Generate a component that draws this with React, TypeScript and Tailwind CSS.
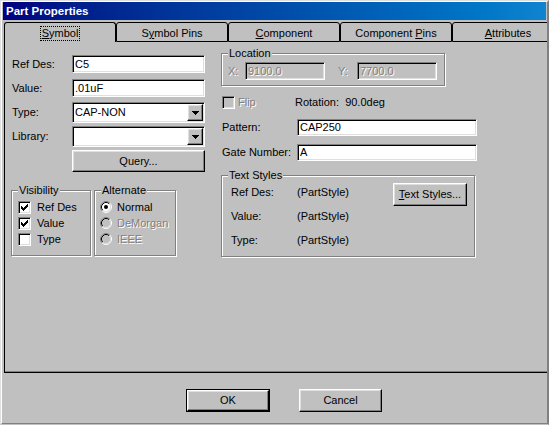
import type { ReactNode } from "react";

const sunken =
  "border border-t-[#808080] border-l-[#808080] border-r-white border-b-white shadow-[inset_1px_1px_0_#000,inset_-1px_-1px_0_#dfdfdf]";
const raised =
  "border border-t-white border-l-white border-r-black border-b-black shadow-[inset_-1px_-1px_0_#808080,inset_1px_1px_0_#dfdfdf]";
const grayed = "text-[#808080] [text-shadow:1px_1px_0_#fff]";
const etched = "border border-[#808080] shadow-[inset_1px_1px_0_#fff,1px_1px_0_#fff]";

function Tab({ children, selected }: { children: ReactNode; selected?: boolean }) {
  return (
    <div
      className={`flex h-[20px] w-[112px] shrink-0 justify-center rounded-t-[3px] border-x border-t border-black ${
        selected ? "pt-[3px]" : "border-b pt-[4px]"
      }`}
    >
      {selected ? (
        <span className="h-[15px] border border-dotted border-black px-px">{children}</span>
      ) : (
        <span>{children}</span>
      )}
    </div>
  );
}

function Key({ children }: { children: ReactNode }) {
  return <span className="underline underline-offset-[1px]">{children}</span>;
}

function TextField({
  children,
  disabled,
  className = "",
}: {
  children?: ReactNode;
  disabled?: boolean;
  className?: string;
}) {
  return (
    <div
      className={`flex shrink-0 items-center px-[2px] ${sunken} ${
        disabled ? `bg-[#c0c0c0] ${grayed}` : "bg-white"
      } ${className}`}
    >
      {children}
    </div>
  );
}

function Combo({ value }: { value: string }) {
  return (
    <div className={`flex h-[21px] w-[133px] shrink-0 bg-white p-px ${sunken}`}>
      <span className="flex flex-1 items-center pl-px">{value}</span>
      <span className={`flex h-full w-[16px] items-center justify-center bg-[#c0c0c0] ${raised}`}>
        <svg width="7" height="4" viewBox="0 0 7 4">
          <path d="M0 0h7v1h-1v1h-1v1h-1v1h-1v-1h-1v-1h-1v-1h-1z" fill="#000" />
        </svg>
      </span>
    </div>
  );
}

function Button({ children, className = "" }: { children: ReactNode; className?: string }) {
  return (
    <div className={`flex shrink-0 items-center justify-center bg-[#c0c0c0] ${raised} ${className}`}>
      {children}
    </div>
  );
}

function CheckBox({ checked, disabled }: { checked?: boolean; disabled?: boolean }) {
  return (
    <span
      className={`flex h-[13px] w-[13px] shrink-0 items-center justify-center ${sunken} ${
        disabled ? "bg-[#c0c0c0]" : "bg-white"
      }`}
    >
      {checked && (
        <svg width="7" height="7" viewBox="0 0 7 7">
          <path
            d="M0 2h1v1h1v1h1v-1h1v-1h1v-1h1v-1h1v3h-1v1h-1v1h-1v1h-1v1h-1v-1h-1v-1h-1z"
            fill="#000"
          />
        </svg>
      )}
    </span>
  );
}

function Radio({ checked, disabled }: { checked?: boolean; disabled?: boolean }) {
  return (
    <svg width="12" height="12" viewBox="0 0 12 12" className="shrink-0">
      <circle cx="6" cy="6" r="4.5" fill={disabled ? "#c0c0c0" : "#fff"} />
      <path d="M2.11 9.89A5.5 5.5 0 0 1 9.89 2.11" fill="none" stroke="#808080" />
      <path d="M9.89 2.11A5.5 5.5 0 0 1 2.11 9.89" fill="none" stroke="#fff" />
      <path d="M2.82 9.18A4.5 4.5 0 0 1 9.18 2.82" fill="none" stroke="#000" />
      <path d="M9.18 2.82A4.5 4.5 0 0 1 2.82 9.18" fill="none" stroke="#dfdfdf" />
      {checked && <circle cx="6" cy="6" r="2" fill="#000" />}
    </svg>
  );
}

function Group({
  title,
  className = "",
  children,
}: {
  title: string;
  className?: string;
  children: ReactNode;
}) {
  return (
    <fieldset className={`shrink-0 ${etched} ${className}`}>
      <legend className="ml-[6px] bg-[#c0c0c0] px-px leading-[13px]">{title}</legend>
      {children}
    </fieldset>
  );
}

function Row({
  label,
  className = "",
  children,
}: {
  label: string;
  className?: string;
  children: ReactNode;
}) {
  return (
    <div className={`flex items-center ${className}`}>
      <span className="w-[61px] shrink-0 pl-px">{label}</span>
      {children}
    </div>
  );
}

export default function App() {
  return (
    <div className="h-[425px] w-[549px] overflow-hidden bg-[#c0c0c0] font-['Liberation_Sans',Arial,sans-serif] text-[11px] leading-[13px] text-black">
      <div className="flex h-full flex-col border border-t-[#dfdfdf] border-l-[#dfdfdf] border-r-[#808080] border-b-[#c0c0c0]">
        <div className="flex flex-1 flex-col border border-t-white border-l-white border-r-[#808080] border-b-[#808080]">
          {/* title bar */}
          <div className="mx-px flex h-[18px] shrink-0 items-center bg-linear-to-r from-[#000080] to-[#1084d0] pl-[3px] text-[11.5px] font-bold text-white">
            Part Properties
          </div>

          {/* tabs */}
          <div className="mt-[2px] flex h-[20px] shrink-0 overflow-hidden pl-[2px]">
            <Tab selected>
              <Key>S</Key>ymbol
            </Tab>
            <Tab>
              S<Key>y</Key>mbol Pins
            </Tab>
            <Tab>
              <Key>C</Key>omponent
            </Tab>
            <Tab>
              Component <Key>P</Key>ins
            </Tab>
            <Tab>
              <Key>A</Key>ttributes
            </Tab>
          </div>

          {/* tab page */}
          <div className="ml-[2px] flex h-[331px] shrink-0 border-b border-l border-b-black border-l-black shadow-[inset_0_-1px_0_#808080]">
            <div className="ml-[6px] flex w-[194px] shrink-0 flex-col pt-[13px]">
              <Row label="Ref Des:">
                <TextField className="h-[18px] w-[133px]">C5</TextField>
              </Row>
              <Row label="Value:" className="mt-[6px]">
                <TextField className="h-[18px] w-[133px]">.01uF</TextField>
              </Row>
              <Row label="Type:" className="mt-[5px]">
                <Combo value="CAP-NON" />
              </Row>
              <Row label="Library:" className="mt-[3px]">
                <Combo value="" />
              </Row>
              <div className="mt-[3px] flex">
                <Button className="ml-[61px] h-[22px] w-[133px]">Query...</Button>
              </div>

              <div className="mt-[12px] flex gap-[3px]">
                <Group title="Visibility" className="h-[72px] w-[80px]">
                  <div className="flex flex-col pl-[6px] pt-[2px]">
                    <label className="flex h-[16px] items-center gap-[6px]">
                      <CheckBox checked />
                      Ref Des
                    </label>
                    <label className="flex h-[16px] items-center gap-[6px]">
                      <CheckBox checked />
                      Value
                    </label>
                    <label className="flex h-[16px] items-center gap-[6px]">
                      <CheckBox />
                      Type
                    </label>
                  </div>
                </Group>
                <Group title="Alternate" className="h-[72px] w-[82px]">
                  <div className="flex flex-col pl-[5px] pt-[2px]">
                    <label className="flex h-[16px] items-center gap-[5px]">
                      <Radio checked />
                      Normal
                    </label>
                    <label className={`flex h-[16px] items-center gap-[5px] ${grayed}`}>
                      <Radio disabled />
                      DeMorgan
                    </label>
                    <label className={`flex h-[16px] items-center gap-[5px] ${grayed}`}>
                      <Radio disabled />
                      IEEE
                    </label>
                  </div>
                </Group>
              </div>
            </div>

            <div className="ml-[16px] flex w-[260px] shrink-0 flex-col pt-[5px]">
              <Group title="Location" className="h-[39px] w-[224px]">
                <div className="flex items-center pl-[6px] pt-[2px]">
                  <span className={`w-[17px] shrink-0 ${grayed}`}>X:</span>
                  <TextField disabled className="h-[18px] w-[80px]">
                    9100.0
                  </TextField>
                  <span className={`ml-[13px] w-[19px] shrink-0 ${grayed}`}>Y:</span>
                  <TextField disabled className="h-[18px] w-[80px]">
                    7700.0
                  </TextField>
                </div>
              </Group>

              <div className="mt-[10px] flex h-[13px] items-center">
                <span className="ml-px flex w-[73px] shrink-0 items-center gap-[3px]">
                  <CheckBox disabled />
                  <span className={grayed}>Flip</span>
                </span>
                <span>Rotation:&nbsp; 90.0deg</span>
              </div>

              <div className="mt-[10px] flex items-center">
                <span className="ml-px w-[75px] shrink-0">Pattern:</span>
                <TextField className="h-[17px] w-[180px]">CAP250</TextField>
              </div>
              <div className="mt-[8px] flex items-center">
                <span className="ml-px w-[75px] shrink-0">Gate Number:</span>
                <TextField className="h-[17px] w-[180px]">A</TextField>
              </div>

              <Group title="Text Styles" className="mt-[8px] h-[88px] w-[254px]">
                <div className="flex">
                  <div className="-mt-[2px] flex flex-col pl-[9px]">
                    {["Ref Des:", "Value:", "Type:"].map((l) => (
                      <div key={l} className="flex h-[24px] items-center">
                        <span className="w-[66px] shrink-0">{l}</span>
                        <span>(PartStyle)</span>
                      </div>
                    ))}
                  </div>
                  <Button className="ml-auto mr-[7px] mt-px h-[23px] w-[74px]">
                    <span>
                      <Key>T</Key>ext Styles...
                    </span>
                  </Button>
                </div>
              </Group>
            </div>
          </div>

          {/* dialog buttons */}
          <div className="flex flex-1 items-start gap-[29px] pl-[184px] pt-[16px]">
            <div className="flex h-[23px] w-[84px] border border-black">
              <Button className="h-full w-full">OK</Button>
            </div>
            <Button className="h-[23px] w-[83px]">Cancel</Button>
          </div>
        </div>
      </div>
    </div>
  );
}
